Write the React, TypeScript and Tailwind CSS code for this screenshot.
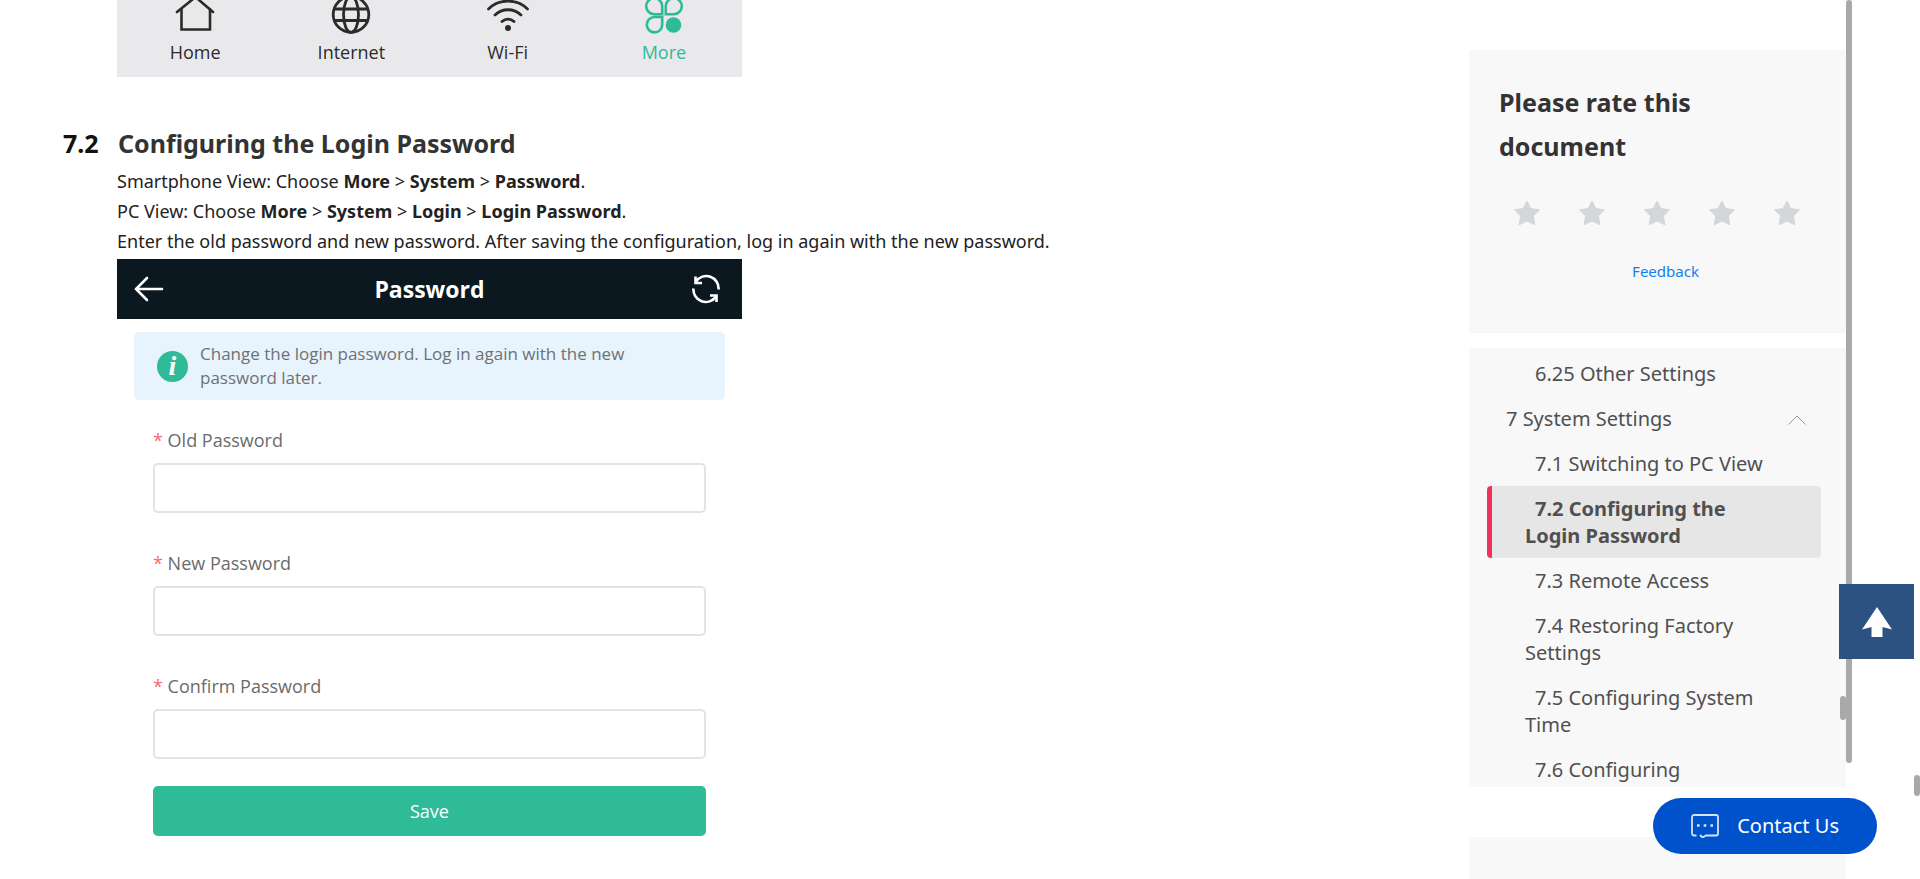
import type { ReactNode } from 'react';

const tabs = [
  { label: 'Home', icon: <HomeIcon /> },
  { label: 'Internet', icon: <GlobeIcon /> },
  { label: 'Wi-Fi', icon: <WifiIcon /> },
  { label: 'More', icon: <MoreIcon />, active: true },
];

const fields = [
  { id: 'old-password', label: 'Old Password' },
  { id: 'new-password', label: 'New Password' },
  { id: 'confirm-password', label: 'Confirm Password' },
];

const sections = [
  { title: '7.1 Switching to PC View' },
  { title: '7.2 Configuring the Login Password', active: true },
  { title: '7.3 Remote Access' },
  { title: '7.4 Restoring Factory Settings' },
  { title: '7.5 Configuring System Time' },
  { title: '7.6 Configuring' },
];

function HomeIcon() {
  return (
    <svg viewBox="0 0 40 40" className="size-10" fill="none" stroke="currentColor" strokeWidth="2.6" strokeLinecap="round">
      <path d="M2 18 20.5 3 38 18" />
      <path d="M6.5 15v20.5H35V15" />
    </svg>
  );
}

function GlobeIcon() {
  return (
    <svg viewBox="0 0 40 40" className="size-10" fill="none" stroke="currentColor" strokeWidth="2.8">
      <circle cx="20" cy="20.5" r="17.8" />
      <ellipse cx="20" cy="20.5" rx="7.5" ry="17.8" />
      <path d="M3 15h34M3 26.5h34" />
    </svg>
  );
}

function WifiIcon() {
  return (
    <svg viewBox="0 0 44 40" className="h-10 w-11" fill="none" stroke="currentColor" strokeWidth="2.8" strokeLinecap="round">
      <path d="M2.500 15C13 4.500 31 4.500 41.500 15" />
      <path d="M9 21c7-7 19-7 26 0" />
      <path d="M16 27.500c3.500-3.300 8.500-3.300 12 0" />
      <circle cx="22" cy="34" r="3" fill="currentColor" stroke="none" />
    </svg>
  );
}

function MoreIcon() {
  return (
    <svg viewBox="0 0 40 40" className="size-10" fill="none" stroke="currentColor" strokeWidth="2.6">
      <path d="M18.200 20.200H10.500A8 8 0 1 1 18.200 12.200Z" />
      <path d="M21.800 20.200H29.500A8 8 0 1 0 21.800 12.200Z" />
      <path d="M18.200 23H10.500A7.700 7.700 0 1 0 18.200 30.500Z" />
      <circle cx="29.500" cy="31" r="7.800" fill="currentColor" stroke="none" />
    </svg>
  );
}

function BackIcon() {
  return (
    <svg viewBox="0 0 30 30" className="size-[30px]" fill="none" stroke="currentColor" strokeWidth="2.6" strokeLinecap="round">
      <path d="M13 4 2 15l11 11M2 15h26" />
    </svg>
  );
}

function RefreshIcon() {
  return (
    <svg viewBox="0 0 30 30" className="size-[30px]" fill="none" stroke="currentColor" strokeWidth="2.6">
      <path d="M5 7.500A12.300 12.300 0 0 1 27.500 15.500" />
      <path d="M11 9H4.500V2.500" />
      <path d="M2.500 14.500A12.300 12.300 0 0 0 25 22.500" />
      <path d="M19 21.500H25.500V28" />
    </svg>
  );
}

function Star() {
  return (
    <svg viewBox="0 0 26 26" className="size-[26px]" fill="#d3d7da" stroke="#d3d7da" strokeLinejoin="round">
      <path d="M13 1 16.800 8.600 25.500 9.800 19.400 16 20.800 24.800 13 21 5.200 24.800 6.600 16 .5 9.800 9.200 8.600Z" />
    </svg>
  );
}

function Choose({ view, steps }: { view: string; steps: string[] }) {
  return (
    <p>
      {view}: Choose{' '}
      {steps.map((step, i) => (
        <span key={step}>
          {i > 0 && ' > '}
          <strong>{step}</strong>
        </span>
      ))}
      .
    </p>
  );
}

function TabBar() {
  return (
    <nav className="flex h-[77px] max-w-[625px] items-end overflow-hidden bg-[#e9e9eb] pb-[11px] font-['Open_Sans',sans-serif] text-[#2b2b2b]">
      {tabs.map((tab) => (
        <a key={tab.label} href="#" className={`flex flex-1 flex-col items-center gap-[5px] ${tab.active ? 'text-[#2fba98]' : ''}`}>
          {tab.icon}
          <span className="text-lg leading-[27px]">{tab.label}</span>
        </a>
      ))}
    </nav>
  );
}

function PasswordScreen() {
  return (
    <div className="max-w-[625px] font-['Open_Sans',sans-serif]">
      <header className="flex h-[60px] items-center justify-between bg-[#0c1820] px-[17px] text-white">
        <button type="button" aria-label="Back" className="pr-2">
          <BackIcon />
        </button>
        <h3 className="text-[23px] leading-8 font-bold">Password</h3>
        <button type="button" aria-label="Refresh" className="px-1">
          <RefreshIcon />
        </button>
      </header>

      <div className="mx-[17px] mt-[13px] flex h-[68px] items-center rounded-[5px] bg-[#e7f4fe] pr-20 pl-[23px]">
        <span className="flex size-[31px] shrink-0 items-center justify-center rounded-full bg-[#2fba98] font-['Liberation_Serif',serif] text-[28px] leading-6 font-bold text-white italic">
          i
        </span>
        <p className="ml-3 text-[17px] leading-6 text-[#6e7173]">
          Change the login password. Log in again with the new password later.
        </p>
      </div>

      <form className="px-9 pt-[26px]" onSubmit={(e) => e.preventDefault()}>
        {fields.map((field) => (
          <div key={field.id} className="mb-9 last-of-type:mb-[27px]">
            <label htmlFor={field.id} className="block text-lg leading-7 text-[#6b6b6b]">
              <span className="text-[#f56c6c]">*</span> {field.label}
            </label>
            <input
              id={field.id}
              type="password"
              className="mt-[9px] block h-[50px] w-full rounded-[5px] border-2 border-[#e3e3e3] bg-white px-3"
            />
          </div>
        ))}
        <button type="submit" className="h-[50px] w-full rounded-[5px] bg-[#2fba98] text-lg text-white">
          Save
        </button>
      </form>
    </div>
  );
}

function Article() {
  return (
    <main className="min-w-0 flex-1 pl-[117px]">
      <TabBar />
      <div className="-ml-[54px] mt-12 flex text-[25px] leading-9 font-bold">
        <span className="w-[55px] text-[#111]">7.2</span>
        <h2 className="text-[#333]">Configuring the Login Password</h2>
      </div>
      <div className="mb-[3px] pt-[5px] text-lg leading-[30px] text-[#222]">
        <Choose view="Smartphone View" steps={['More', 'System', 'Password']} />
        <Choose view="PC View" steps={['More', 'System', 'Login', 'Login Password']} />
        <p>Enter the old password and new password. After saving the configuration, log in again with the new password.</p>
      </div>
      <PasswordScreen />
    </main>
  );
}

function RatingCard() {
  return (
    <section className="h-[283px] bg-[#f8f8f8] px-[30px] pt-[30px]">
      <h2 className="pr-16 text-[25px] leading-[44px] font-bold text-[#333]">Please rate this document</h2>
      <div className="mt-8 flex justify-between pr-4 pl-[15px]">
        {[1, 2, 3, 4, 5].map((n) => (
          <button key={n} type="button" aria-label={`${n} stars`}>
            <Star />
          </button>
        ))}
      </div>
      <p className="mt-[33px] pl-4 text-center text-[15px] leading-6">
        <a href="#" className="text-[#1080ee]">Feedback</a>
      </p>
    </section>
  );
}

function TocLink({ children, active }: { children: ReactNode; active?: boolean }) {
  return (
    <a
      href="#"
      className={`block rounded border-l-[5px] py-[9px] pr-[54px] pl-[33px] indent-[10px] ${
        active ? 'border-[#f0325f] bg-[#e6e6e6] font-bold' : 'border-transparent'
      }`}
    >
      {children}
    </a>
  );
}

function Toc() {
  return (
    <nav className="h-[439px] overflow-hidden bg-[#f8f8f8] pt-[3px] pr-[25px] pl-[18px] text-xl leading-[27px] text-[#505050]">
      <TocLink>6.25 Other Settings</TocLink>
      <a href="#" className="flex items-center justify-between py-[9px] pr-[15px] pl-[19px]">
        7 System Settings
        <svg viewBox="0 0 18 12" className="h-3 w-[18px]" fill="none" stroke="#999">
          <path d="M.5 11.500 9 3l8.500 8.500" />
        </svg>
      </a>
      {sections.map((s) => (
        <TocLink key={s.title} active={s.active}>
          {s.title}
        </TocLink>
      ))}
    </nav>
  );
}

export default function App() {
  return (
    <div className="relative h-screen overflow-hidden bg-white font-['Noto_Sans',sans-serif]">
      <div className="flex pr-[74px]">
        <Article />
        <aside className="w-[377px] shrink-0 pt-[50px]">
          <RatingCard />
          <div className="mt-[15px]">
            <Toc />
          </div>
          <section className="mt-[50px] h-40 bg-[#f8f8f8]" />
        </aside>
      </div>

      {/* Scroll thumbs */}
      <div className="absolute top-0 right-[68px] h-[763px] w-1.5 rounded-full bg-[#a9a9a9]" />
      <div className="absolute top-[696px] right-[74px] h-6 w-1.5 rounded-full bg-[#a9a9a9]" />
      <div className="absolute top-[775px] right-0 h-[21px] w-1.5 rounded-full bg-[#a9a9a9]" />

      {/* Back to top */}
      <button
        type="button"
        aria-label="Back to top"
        className="fixed right-1.5 bottom-[220px] flex size-[75px] items-center justify-center bg-[#2c5282] text-white"
      >
        <svg viewBox="0 0 30 30" className="size-[30px]" fill="currentColor">
          <path d="M15 0 30 22.500 20.500 20v10h-11V20L0 22.500Z" />
        </svg>
      </button>

      <button
        type="button"
        className="fixed right-[43px] bottom-[25px] flex h-14 items-center gap-[18px] rounded-full bg-[#0052cc] px-[38px] text-xl text-white"
      >
        <svg viewBox="0 0 28 24" className="h-6 w-7" fill="none" stroke="#d5e3f7" strokeWidth="1.8">
          <path d="M5.500 21.500H3A2 2 0 0 1 1 19.500V3A2 2 0 0 1 3 1H25A2 2 0 0 1 27 3V19.500A2 2 0 0 1 25 21.500H15L11.500 23.500 9 21" />
          <path d="M6 11.500h2.600M12.700 11.500h2.600M19.400 11.500h2.600" strokeWidth="2.600" />
        </svg>
        Contact Us
      </button>
    </div>
  );
}
